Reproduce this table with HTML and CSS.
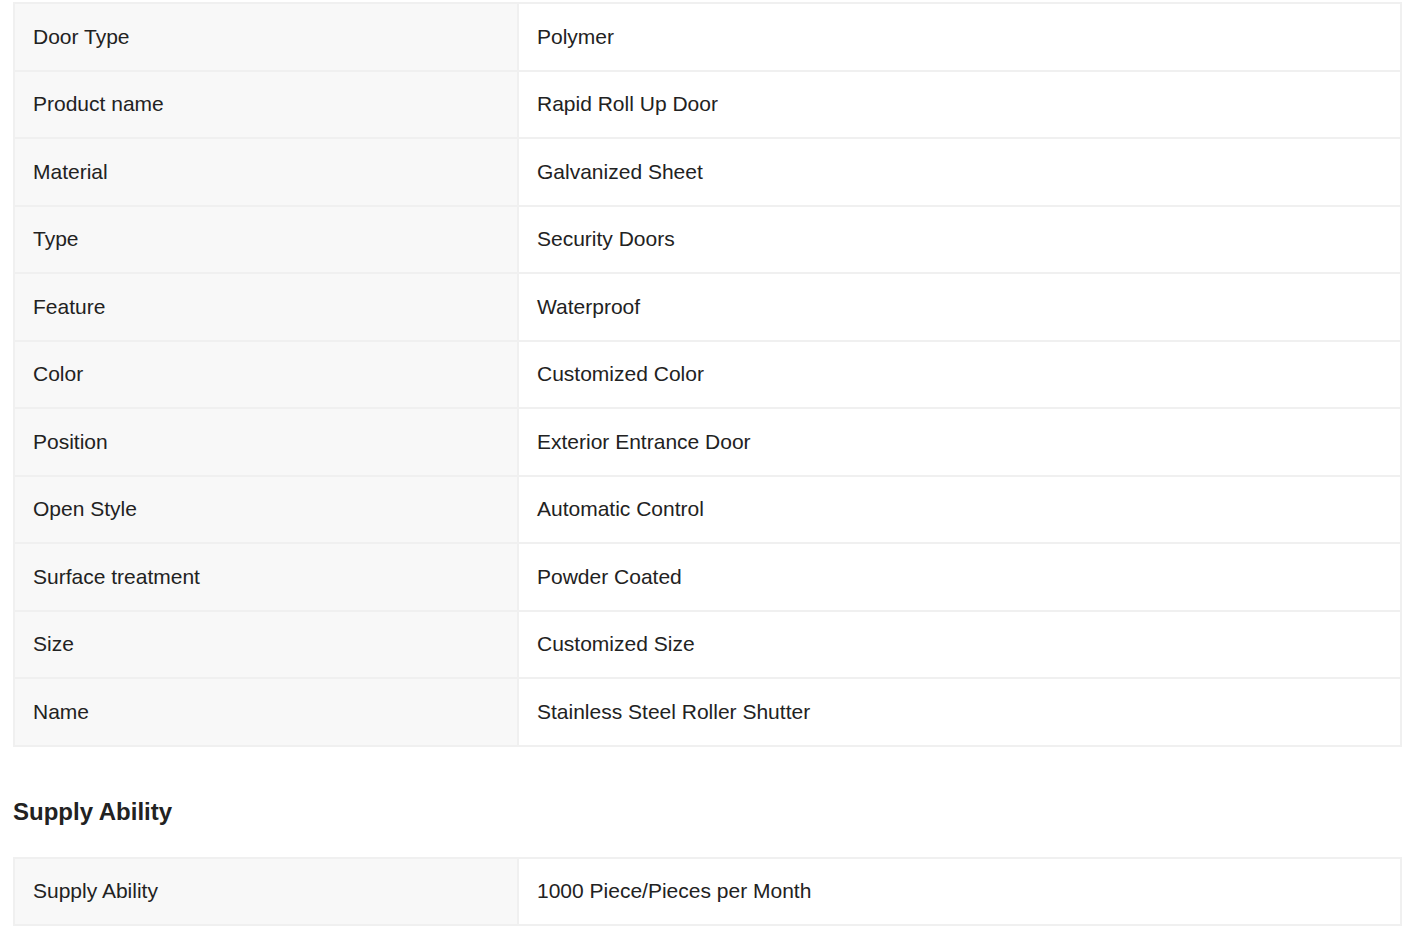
FILE: index.html
```html
<!DOCTYPE html>
<html lang="en">
<head>
<meta charset="utf-8">
<title>Product Specifications</title>
<link rel="stylesheet" href="styles.css">
</head>
<body>
<div class="wrap">
  <table class="spec">
    <tbody>
      <tr><td class="k">Door Type</td><td class="v">Polymer</td></tr>
      <tr><td class="k">Product name</td><td class="v">Rapid Roll Up Door</td></tr>
      <tr><td class="k">Material</td><td class="v">Galvanized Sheet</td></tr>
      <tr><td class="k">Type</td><td class="v">Security Doors</td></tr>
      <tr><td class="k">Feature</td><td class="v">Waterproof</td></tr>
      <tr><td class="k">Color</td><td class="v">Customized Color</td></tr>
      <tr><td class="k">Position</td><td class="v">Exterior Entrance Door</td></tr>
      <tr><td class="k">Open Style</td><td class="v">Automatic Control</td></tr>
      <tr><td class="k">Surface treatment</td><td class="v">Powder Coated</td></tr>
      <tr><td class="k">Size</td><td class="v">Customized Size</td></tr>
      <tr><td class="k">Name</td><td class="v">Stainless Steel Roller Shutter</td></tr>
    </tbody>
  </table>
  <h2 class="section-title">Supply Ability</h2>
  <table class="spec">
    <tbody>
      <tr><td class="k">Supply Ability</td><td class="v">1000 Piece/Pieces per Month</td></tr>
    </tbody>
  </table>
</div>
</body>
</html>
```
FILE: styles.css
```css
html, body {
  margin: 0;
  padding: 0;
  background: #fff;
}
body {
  font-family: Arial, "Liberation Sans", Helvetica, sans-serif;
  color: #222;
}
.wrap {
  padding: 2px 14px 0 13px;
}
.spec {
  width: 100%;
  border-spacing: 0;
  border-top: 2px solid #f0f0f0;
  border-left: 2px solid #f0f0f0;
  font-size: 21px;
}
.spec td {
  padding: 20.75px 18px 21.25px;
  line-height: 23.5px;
  border-right: 2px solid #f0f0f0;
  border-bottom: 2px solid #f0f0f0;
  vertical-align: middle;
  text-align: left;
}
.spec td.k {
  box-sizing: border-box;
  width: 504px;
  background: #f8f8f8;
}
.spec td.v {
  background: #fff;
}
.section-title {
  margin: 51px 0 31px;
  font-size: 24px;
  line-height: 28px;
  font-weight: bold;
  color: #222;
}
```
